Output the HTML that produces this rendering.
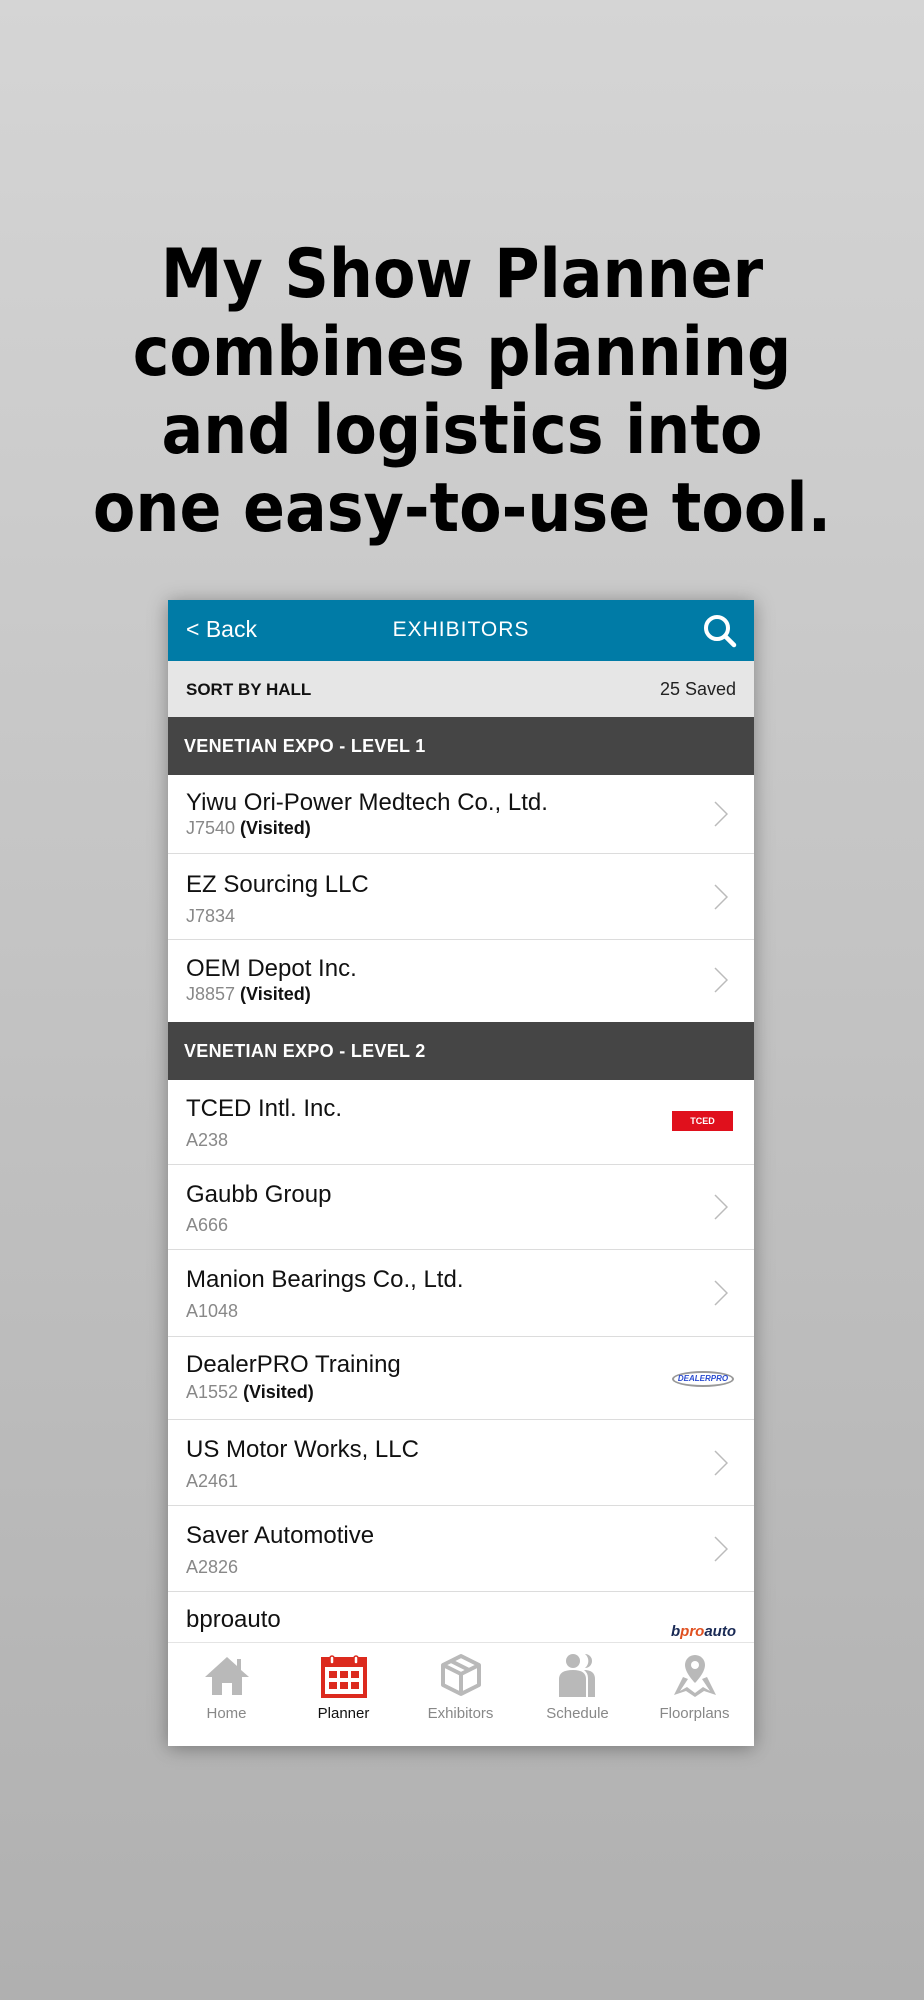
<!DOCTYPE html>
<html><head><meta charset="utf-8">
<style>
*{margin:0;padding:0;box-sizing:border-box}
body{width:924px;height:2000px;overflow:hidden;background:linear-gradient(#d5d5d5,#b0b0b0);font-family:"Liberation Sans",sans-serif;position:relative}
.h{position:absolute;left:0;width:924px;text-align:center;font-family:"DejaVu Sans",sans-serif;font-weight:bold;font-size:68px;line-height:78px;top:236px;color:#000;transform:scaleX(0.91);transform-origin:462px 0}
.ph{position:absolute;left:168px;top:600px;width:586px;height:1146px;background:#fff;box-shadow:0 2px 18px rgba(0,0,0,.35);overflow:hidden}
.a{position:absolute;left:0;width:586px}
.nav{top:0;height:61px;background:#007ba6;color:#fff}
.sort{top:61px;height:56px;background:#e6e6e6}
.sec{height:58px;background:#454545;color:#fff;font-weight:bold;font-size:18px;letter-spacing:.3px;padding-left:16px;line-height:58px}
.row{border-bottom:1.5px solid #dcdcdc;background:#fff}
.nm{position:absolute;left:18px;font-size:24px;color:#111}
.cd{position:absolute;left:18px;font-size:18px;color:#888}
.cd b{color:#111}
.chev{position:absolute;right:26px;width:14px;height:26px}
.tab{position:absolute;top:0;width:117px;text-align:center;font-size:15px;color:#888}
</style></head><body>
<div class="h">My Show Planner<br>combines planning<br>and logistics into<br>one easy-to-use tool.</div>
<div class="ph">
 <div class="a nav">
  <div style="position:absolute;left:18px;top:16px;font-size:23px">&lt; Back</div>
  <div style="position:absolute;left:0;width:586px;text-align:center;top:18px;font-size:21px;letter-spacing:1px">EXHIBITORS</div>
  <svg style="position:absolute;left:534px;top:13px" width="36" height="36" viewBox="0 0 36 36"><circle cx="15" cy="15" r="11" fill="none" stroke="#fff" stroke-width="4"/><line x1="23" y1="23" x2="32" y2="32" stroke="#fff" stroke-width="4.5" stroke-linecap="round"/></svg>
 </div>
 <div class="a sort">
  <div style="position:absolute;left:18px;top:19px;font-size:17px;font-weight:bold;color:#111">SORT BY HALL</div>
  <div style="position:absolute;right:18px;top:18px;font-size:18px;color:#222">25 Saved</div>
 </div>
 <div class="a sec" style="top:117px">VENETIAN EXPO - LEVEL 1</div>
 <div class="a row" style="top:175px;height:79px"><div class="nm" style="top:14px">Yiwu Ori-Power Medtech Co., Ltd.</div><div class="cd" style="top:43px">J7540 <b>(Visited)</b></div><svg class="chev" style="top:26px" viewBox="0 0 14 26"><path d="M1 1L13 13L1 25" fill="none" stroke="#bbb" stroke-width="1.5"/></svg></div>
 <div class="a row" style="top:254px;height:86px"><div class="nm" style="top:17px">EZ Sourcing LLC</div><div class="cd" style="top:52px">J7834</div><svg class="chev" style="top:30px" viewBox="0 0 14 26"><path d="M1 1L13 13L1 25" fill="none" stroke="#bbb" stroke-width="1.5"/></svg></div>
 <div class="a row" style="top:340px;height:82px;border:0"><div class="nm" style="top:15px">OEM Depot Inc.</div><div class="cd" style="top:44px">J8857 <b>(Visited)</b></div><svg class="chev" style="top:27px" viewBox="0 0 14 26"><path d="M1 1L13 13L1 25" fill="none" stroke="#bbb" stroke-width="1.5"/></svg></div>
 <div class="a sec" style="top:422px">VENETIAN EXPO - LEVEL 2</div>
 <div class="a row" style="top:480px;height:85px"><div class="nm" style="top:15px">TCED Intl. Inc.</div><div class="cd" style="top:50px">A238</div><div style="position:absolute;left:504px;top:31px;width:61px;height:20px;background:#e0101c;color:#fff;font-size:9px;font-weight:bold;text-align:center;line-height:20px">TCED</div></div>
 <div class="a row" style="top:565px;height:85px"><div class="nm" style="top:16px">Gaubb Group</div><div class="cd" style="top:50px">A666</div><svg class="chev" style="top:29px" viewBox="0 0 14 26"><path d="M1 1L13 13L1 25" fill="none" stroke="#bbb" stroke-width="1.5"/></svg></div>
 <div class="a row" style="top:650px;height:87px"><div class="nm" style="top:16px">Manion Bearings Co., Ltd.</div><div class="cd" style="top:51px">A1048</div><svg class="chev" style="top:30px" viewBox="0 0 14 26"><path d="M1 1L13 13L1 25" fill="none" stroke="#bbb" stroke-width="1.5"/></svg></div>
 <div class="a row" style="top:737px;height:83px"><div class="nm" style="top:14px">DealerPRO Training</div><div class="cd" style="top:45px">A1552 <b>(Visited)</b></div><div style="position:absolute;left:504px;top:34px;width:62px;height:16px;border-radius:50%;border:2px solid #999;font-size:8px;font-style:italic;font-weight:bold;color:#2a4bd0;text-align:center;line-height:12px">DEALERPRO</div></div>
 <div class="a row" style="top:820px;height:86px"><div class="nm" style="top:16px">US Motor Works, LLC</div><div class="cd" style="top:51px">A2461</div><svg class="chev" style="top:30px" viewBox="0 0 14 26"><path d="M1 1L13 13L1 25" fill="none" stroke="#bbb" stroke-width="1.5"/></svg></div>
 <div class="a row" style="top:906px;height:86px"><div class="nm" style="top:16px">Saver Automotive</div><div class="cd" style="top:51px">A2826</div><svg class="chev" style="top:30px" viewBox="0 0 14 26"><path d="M1 1L13 13L1 25" fill="none" stroke="#bbb" stroke-width="1.5"/></svg></div>
 <div class="a row" style="top:992px;height:60px;border:0"><div class="nm" style="top:14px">bproauto</div><div style="position:absolute;left:503px;top:31px;font-size:15px;font-weight:bold;font-style:italic;color:#1a2a55">b<span style="color:#e05020">pro</span>auto</div></div>
 <div class="a" style="top:1042px;height:104px;background:#fff;border-top:1.5px solid #e4e4e4">
  <div class="tab" style="left:0"><svg style="margin-top:12px" width="48" height="40" viewBox="0 0 48 40"><path d="M24 2L2 22H9V40H19V28H29V40H39V22H46L38 15V4H34V11Z" fill="#b9b9b9"/></svg><div style="margin-top:6px">Home</div></div>
  <div class="tab" style="left:117px;color:#111"><svg style="margin-top:9px" width="48" height="46" viewBox="0 0 48 46"><rect x="1" y="5" width="46" height="41" fill="#dc2a1e"/><rect x="5" y="15" width="38" height="27" fill="#fff"/><rect x="10" y="4" width="4" height="8" rx="2" fill="#fff" stroke="#dc2a1e" stroke-width="1.5"/><rect x="34" y="4" width="4" height="8" rx="2" fill="#fff" stroke="#dc2a1e" stroke-width="1.5"/><g fill="#dc2a1e"><rect x="9" y="19" width="8" height="7"/><rect x="20" y="19" width="8" height="7"/><rect x="31" y="19" width="8" height="7"/><rect x="9" y="30" width="8" height="7"/><rect x="20" y="30" width="8" height="7"/><rect x="31" y="30" width="8" height="7"/></g></svg><div style="margin-top:3px">Planner</div></div>
  <div class="tab" style="left:234px"><svg style="margin-top:10px" width="44" height="44" viewBox="0 0 44 44"><path d="M22 3L40 12V32L22 41L4 32V12Z M4 12L22 21L40 12 M22 21V41" fill="none" stroke="#b9b9b9" stroke-width="4" stroke-linejoin="round"/><path d="M12 8L30 17" stroke="#b9b9b9" stroke-width="4"/></svg><div style="margin-top:4px">Exhibitors</div></div>
  <div class="tab" style="left:351px"><svg style="margin-top:10px" width="46" height="44" viewBox="0 0 46 44"><circle cx="18" cy="8" r="7" fill="#b9b9b9"/><path d="M30 1A7 7 0 0 1 30 15A9 9 0 0 0 30 1Z" fill="#b9b9b9"/><path d="M4 44V26Q4 17 18 17Q31 17 31 26V44Z" fill="#b9b9b9"/><path d="M33 44V25Q33 20 29 17Q40 17 40 26V44Z" fill="#b9b9b9"/></svg><div style="margin-top:4px">Schedule</div></div>
  <div class="tab" style="left:468px"><svg style="margin-top:10px" width="46" height="46" viewBox="0 0 46 46"><path d="M23 2A10 10 0 0 1 33 12C33 20 23 30 23 30C23 30 13 20 13 12A10 10 0 0 1 23 2Z" fill="#b9b9b9"/><circle cx="23" cy="12" r="4" fill="#fff"/><path d="M11 24L2 42L14 38L23 44L32 38L44 42L35 24L30 26L38 38L31 34L23 40L15 34L8 38L16 26Z" fill="#b9b9b9"/></svg><div style="margin-top:2px">Floorplans</div></div>
 </div>
</div>
</body></html>
